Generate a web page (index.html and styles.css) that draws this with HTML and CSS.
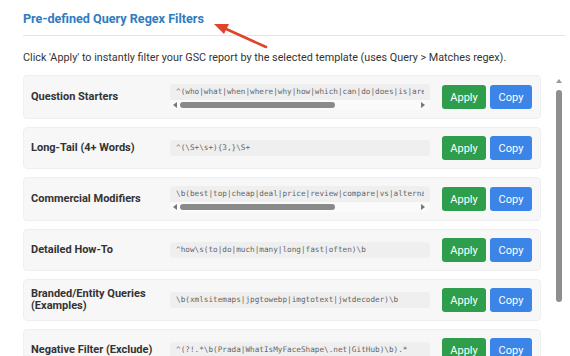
FILE: index.html
```html
<!DOCTYPE html>
<html lang="en">
<head>
	<meta charset="UTF-8">
	<title>Regex Filters</title>
	<link rel="stylesheet" href="styles.css">
</head>
<body>
	<div class="panel">
		<h2 class="panel-title">Pre-defined Query Regex Filters</h2>
		<svg class="pointer" width="70" height="40" viewBox="0 0 70 40">
			<line x1="57" y1="32" x2="15" y2="13" stroke="#e0452b" stroke-width="2.6" stroke-linecap="round"/>
			<polygon points="5,9 20,9 15,19" fill="#e0452b"/>
		</svg>
		<p class="panel-desc">Click 'Apply' to instantly filter your GSC report by the selected template (uses Query &gt; Matches regex).</p>

		<div class="list-wrap">
			<div class="filter-list">
				<div class="filter-row">
					<div class="filter-name">Question Starters</div>
					<div class="filter-code">
						<div class="code-text">^(who|what|when|where|why|how|which|can|do|does|is|are|will|should|could|would)\b</div>
						<div class="hscroll"><span class="arr-left"></span><span class="hthumb"></span><span class="arr-right"></span></div>
					</div>
					<div class="filter-btns"><button class="btn btn-apply">Apply</button><button class="btn btn-copy">Copy</button></div>
				</div>
				<div class="filter-row">
					<div class="filter-name">Long-Tail (4+ Words)</div>
					<div class="filter-code"><div class="code-text">^(\S+\s+){3,}\S+</div></div>
					<div class="filter-btns"><button class="btn btn-apply">Apply</button><button class="btn btn-copy">Copy</button></div>
				</div>
				<div class="filter-row">
					<div class="filter-name">Commercial Modifiers</div>
					<div class="filter-code">
						<div class="code-text">\b(best|top|cheap|deal|price|review|compare|vs|alternative|discount|coupon|buy)\b</div>
						<div class="hscroll"><span class="arr-left"></span><span class="hthumb"></span><span class="arr-right"></span></div>
					</div>
					<div class="filter-btns"><button class="btn btn-apply">Apply</button><button class="btn btn-copy">Copy</button></div>
				</div>
				<div class="filter-row">
					<div class="filter-name">Detailed How-To</div>
					<div class="filter-code"><div class="code-text">^how\s(to|do|much|many|long|fast|often)\b</div></div>
					<div class="filter-btns"><button class="btn btn-apply">Apply</button><button class="btn btn-copy">Copy</button></div>
				</div>
				<div class="filter-row">
					<div class="filter-name">Branded/Entity Queries (Examples)</div>
					<div class="filter-code"><div class="code-text">\b(xmlsitemaps|jpgtowebp|imgtotext|jwtdecoder)\b</div></div>
					<div class="filter-btns"><button class="btn btn-apply">Apply</button><button class="btn btn-copy">Copy</button></div>
				</div>
				<div class="filter-row">
					<div class="filter-name">Negative Filter (Exclude)</div>
					<div class="filter-code"><div class="code-text">^(?!.*\b(Prada|WhatIsMyFaceShape\.net|GitHub)\b).*</div></div>
					<div class="filter-btns"><button class="btn btn-apply">Apply</button><button class="btn btn-copy">Copy</button></div>
				</div>
			</div>
			<div class="vscroll">
				<span class="arr-up"></span>
				<span class="vthumb"></span>
			</div>
		</div>
	</div>
</body>
</html>
```

FILE: styles.css
```css
*{
	margin: 0;
	padding: 0;
	box-sizing: border-box;
}
body{
	font-family: Roboto, "Liberation Sans", Arial, sans-serif;
	color: #333;
	background: #fff;
	overflow: hidden;
}
.panel{
	width: 542px;
	margin-left: 23px;
	padding-top: 10px;
	position: relative;
}
.panel-title{
	font-size: 12.6px;
	line-height: 18px;
	font-weight: 700;
	color: #2f7cc0;
	padding-bottom: 7px;
	border-bottom: 1px solid #e4e4e4;
}
.pointer{
	position: absolute;
	left: 186px;
	top: 15px;
	overflow: visible;
}
.panel-desc{
	font-size: 10.8px;
	line-height: 16px;
	margin-top: 14px;
	color: #333;
}
.list-wrap{
	display: flex;
	margin-top: 9px;
	height: 281px;
	overflow: hidden;
}
.filter-list{
	flex: 0 0 518px;
	min-width: 0;
}
.filter-row{
	display: flex;
	align-items: center;
	background: #f7f7f7;
	border: 1px solid #efefef;
	border-radius: 4px;
	padding: 8px 8px 8px 7px;
	margin-bottom: 8px;
}
.filter-name{
	flex: 0 0 130px;
	font-size: 11px;
	line-height: 12px;
	font-weight: 700;
	color: #333;
}
.filter-code{
	flex: 1;
	min-width: 0;
	margin-left: 9px;
	background: #efefef;
	border-radius: 3px;
	padding: 3px 6px;
	overflow: hidden;
}
.code-text{
	font-family: "DejaVu Sans Mono", "Liberation Mono", monospace;
	font-size: 7.7px;
	line-height: 10px;
	color: #666;
	white-space: nowrap;
	overflow: hidden;
}
.hscroll{
	display: flex;
	align-items: center;
	height: 10px;
	margin: 3px -6px -3px;
	background: #fafafa;
}
.hthumb{
	width: 155px;
	height: 6px;
	margin-left: 3px;
	border-radius: 3px;
	background: #8a8a8a;
}
.arr-left,.arr-right{
	width: 0;
	height: 0;
	border-top: 3.5px solid transparent;
	border-bottom: 3.5px solid transparent;
}
.arr-left{
	margin-left: 3px;
	border-right: 4px solid #777;
}
.arr-right{
	margin-left: auto;
	margin-right: 5px;
	border-left: 4px solid #777;
}
.filter-btns{
	display: flex;
	gap: 4px;
	margin-left: 12px;
}
.btn{
	height: 24px;
	border: 0;
	border-radius: 3px;
	color: #fff;
	font-family: Roboto, "Liberation Sans", Arial, sans-serif;
	font-size: 11px;
	cursor: pointer;
}
.btn-apply{
	width: 44px;
	background-color: #2f9e4c;
}
.btn-copy{
	width: 42px;
	background-color: #3c85e8;
}
.vscroll{
	flex: 0 0 12px;
	margin-left: 12px;
	display: flex;
	flex-direction: column;
	align-items: center;
}
.arr-up{
	width: 0;
	height: 0;
	margin-top: 4px;
	border-left: 3.5px solid transparent;
	border-right: 3.5px solid transparent;
	border-bottom: 4px solid #999;
}
.vthumb{
	width: 6px;
	height: 212px;
	margin-top: 7px;
	border-radius: 3px;
	background: #8e8e8e;
}
```
